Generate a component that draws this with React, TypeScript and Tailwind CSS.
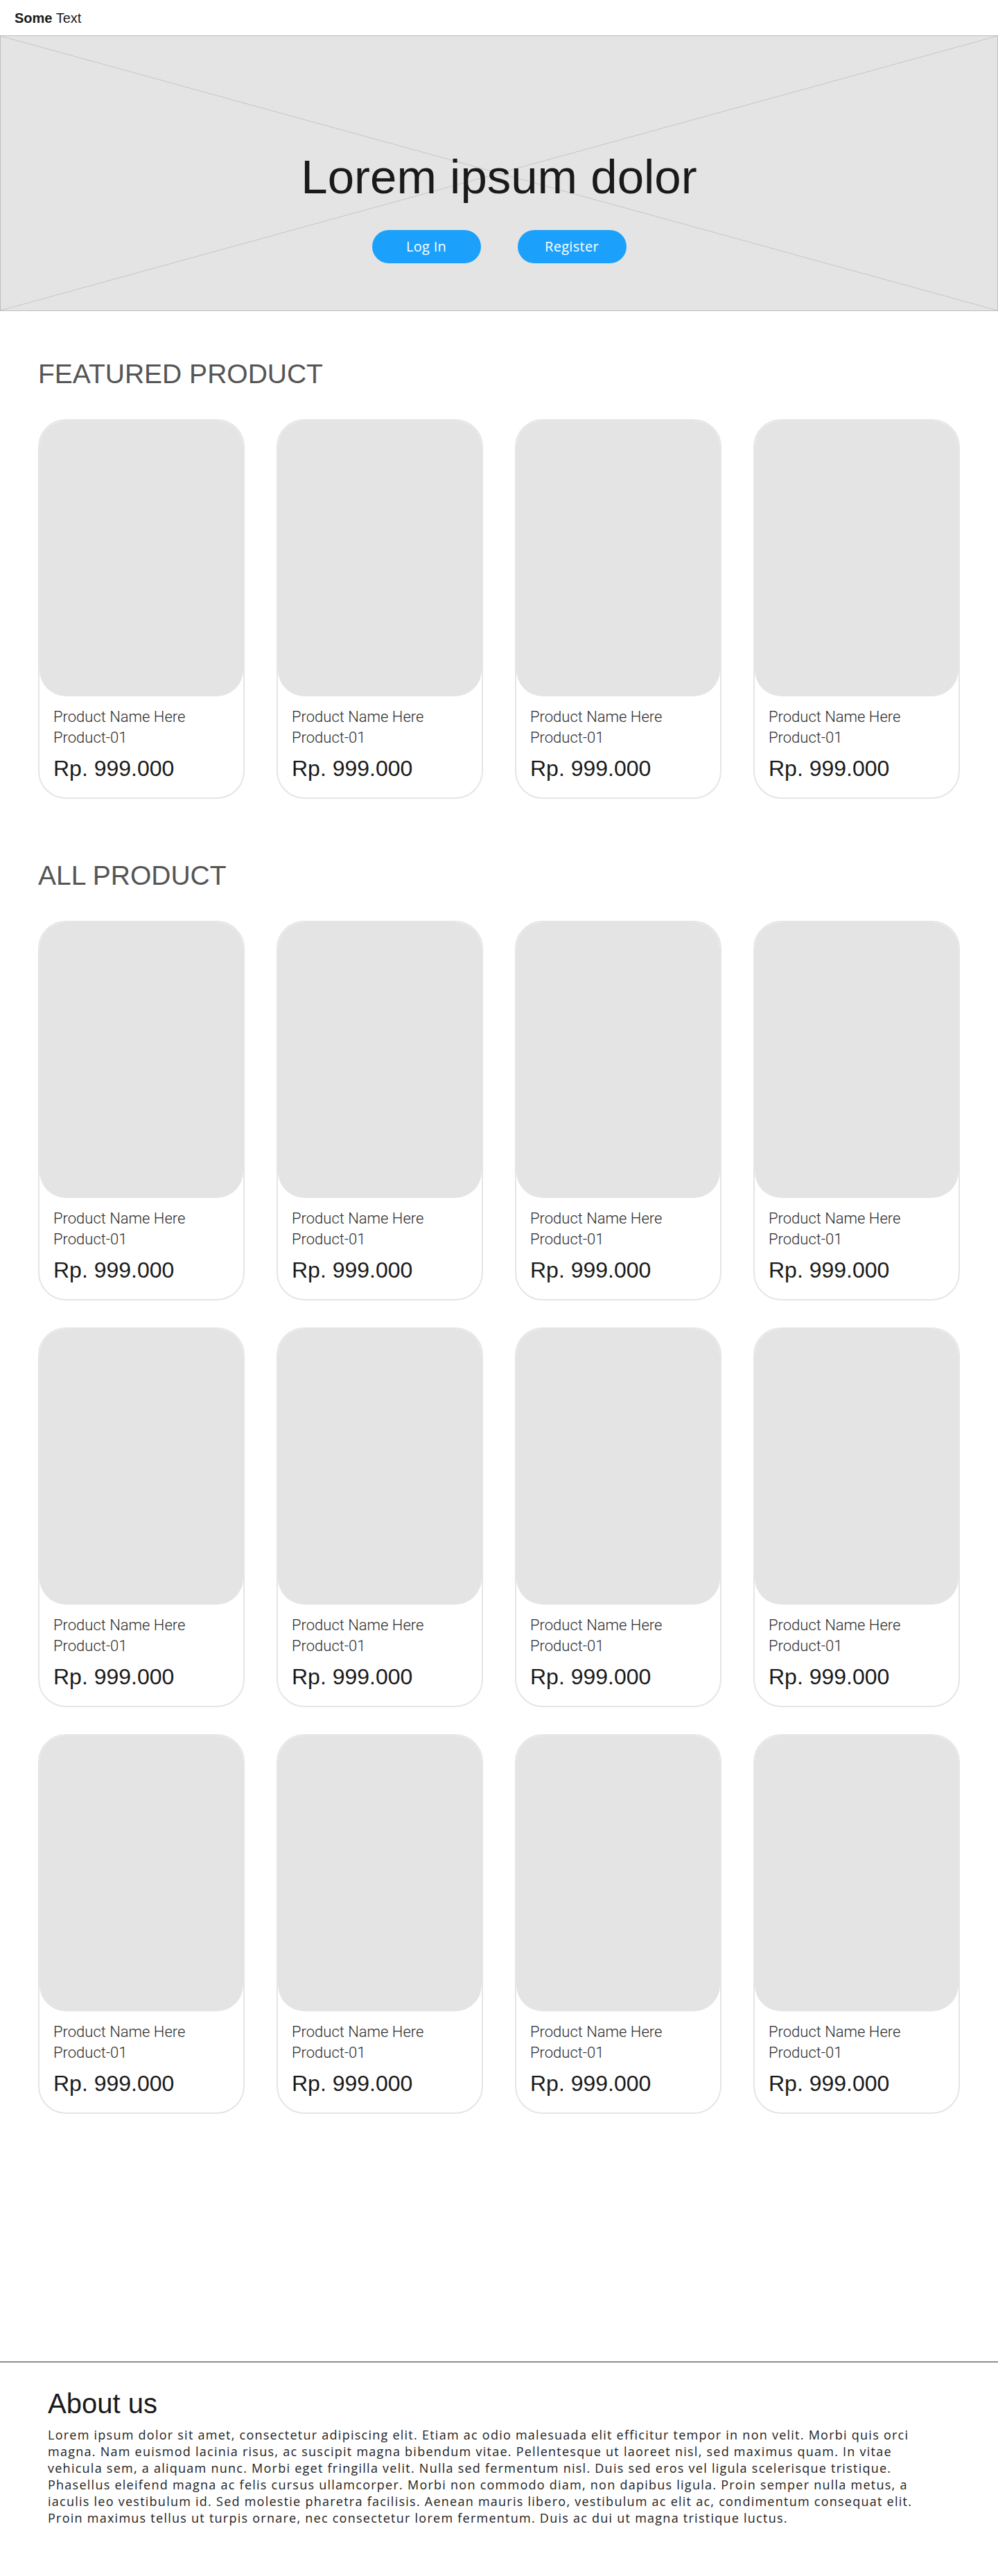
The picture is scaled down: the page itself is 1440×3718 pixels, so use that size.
import React from "react";

function ProductCard() {
  return (
    <div className="flex h-[548px] flex-col overflow-hidden rounded-[40px] border-2 border-[#e5e5e5] bg-white">
      <div className="h-[398px] w-full shrink-0 rounded-[38px] bg-[#e4e4e4]" />
      <div className="px-[20px] pt-[15px]">
        <p className="font-['Roboto',sans-serif] text-[22px] font-light leading-[30px] text-[#2b2b2b]">
          Product Name Here
        </p>
        <p className="font-['Roboto',sans-serif] text-[22px] font-light leading-[30px] text-[#2b2b2b]">
          Product-01
        </p>
        <p className="mt-[9px] font-['Liberation_Sans',Arial,sans-serif] text-[32px] leading-[40px] text-[#1a1a1a]">
          Rp. 999.000
        </p>
      </div>
    </div>
  );
}

function ProductGrid({ count }: { count: number }) {
  return (
    <div className="grid grid-cols-4 gap-x-[46px] gap-y-[39px]">
      {Array.from({ length: count }).map((_, i) => (
        <ProductCard key={i} />
      ))}
    </div>
  );
}

export default function App() {
  return (
    <div className="min-h-[3718px] w-full bg-white font-['Liberation_Sans',Arial,sans-serif]">
      {/* Header */}
      <header className="flex h-[51px] items-center px-[21px]">
        <span className="text-[20px] leading-none text-[#1a1a1a]">
          <span className="font-bold">Some</span> Text
        </span>
      </header>

      {/* Hero */}
      <section className="relative h-[398px] border border-[#bdbdbd] bg-[#e4e4e4]">
        <svg
          className="absolute inset-0 h-full w-full"
          preserveAspectRatio="none"
          viewBox="0 0 100 100"
        >
          <line x1="0" y1="0" x2="100" y2="100" stroke="#c6c6c6" strokeWidth="1" vectorEffect="non-scaling-stroke" />
          <line x1="100" y1="0" x2="0" y2="100" stroke="#c6c6c6" strokeWidth="1" vectorEffect="non-scaling-stroke" />
        </svg>
        <div className="relative flex flex-col items-center pt-[170px]">
          <h1 className="text-[69px] leading-[68px] text-[#1a1a1a]">Lorem ipsum dolor</h1>
          <div className="mt-[42px] flex gap-[53px]">
            <button className="flex h-[48px] w-[157px] items-center justify-center rounded-[24px] bg-[#1ba1fb] font-['Open_Sans',sans-serif] text-[20px] tracking-[0.3px] text-white">
              Log In
            </button>
            <button className="flex h-[48px] w-[157px] items-center justify-center rounded-[24px] bg-[#1ba1fb] font-['Open_Sans',sans-serif] text-[20px] tracking-[0.3px] text-white">
              Register
            </button>
          </div>
        </div>
      </section>

      {/* Featured */}
      <section className="px-[55px] pt-[71px]">
        <h2 className="text-[39px] leading-[39px] text-[#555555]">FEATURED PRODUCT</h2>
        <div className="mt-[46px]">
          <ProductGrid count={4} />
        </div>
      </section>

      {/* All product */}
      <section className="px-[55px] pt-[91px]">
        <h2 className="text-[39px] leading-[39px] text-[#555555]">ALL PRODUCT</h2>
        <div className="mt-[46px]">
          <ProductGrid count={12} />
        </div>
      </section>

      {/* Footer */}
      <footer className="mt-[357px] border-t-2 border-[#8f8f8f] px-[69px] pt-[40px]">
        <h3 className="text-[40px] leading-[38px] text-[#1a1a1a]">About us</h3>
        <p className="mt-[14px] max-w-[1268px] font-['Open_Sans',sans-serif] text-[18px] leading-[24px] tracking-[1.25px] text-[#222222]">
          Lorem ipsum dolor sit amet, consectetur adipiscing elit. Etiam ac odio malesuada elit efficitur tempor in non velit. Morbi quis orci magna. Nam euismod lacinia risus, ac suscipit magna bibendum vitae. Pellentesque ut laoreet nisl, sed maximus quam. In vitae vehicula sem, a aliquam nunc. Morbi eget fringilla velit. Nulla sed fermentum nisl. Duis sed eros vel ligula scelerisque tristique. Phasellus eleifend magna ac felis cursus ullamcorper. Morbi non commodo diam, non dapibus ligula. Proin semper nulla metus, a iaculis leo vestibulum id. Sed molestie pharetra facilisis. Aenean mauris libero, vestibulum ac elit ac, condimentum consequat elit. Proin maximus tellus ut turpis ornare, nec consectetur lorem fermentum. Duis ac dui ut magna tristique luctus.
        </p>
      </footer>
    </div>
  );
}
